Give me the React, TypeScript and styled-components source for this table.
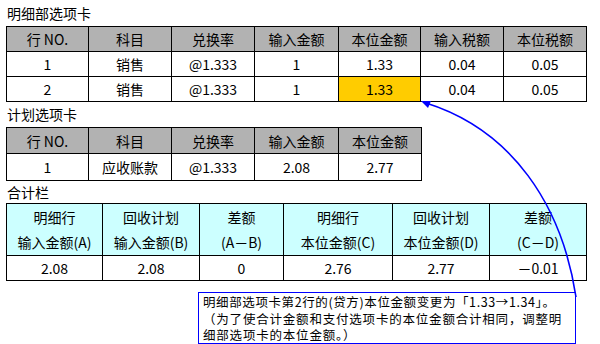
import React from "react";
import styled, { createGlobalStyle } from "styled-components";

const Global = createGlobalStyle`
  html, body { margin: 0; padding: 0; background: #fff; }
  body { font-family: "Noto Sans CJK SC", "Noto Sans", sans-serif; color: #000; }
`;

const Page = styled.div`
  position: relative;
  width: 600px;
  height: 344px;
  overflow: hidden;
  display: flex;
  flex-direction: column;
  padding-left: 6px;
  box-sizing: border-box;
`;

const Title = styled.div<{ $h: number }>`
  height: ${(p) => p.$h}px;
  font-size: 14px;
  line-height: ${(p) => p.$h}px;
  padding-left: 1px;
  white-space: nowrap;
`;

const Table = styled.table<{ $w: number }>`
  border-collapse: collapse;
  table-layout: fixed;
  width: ${(p) => p.$w}px;
  font-size: 14px;
`;

const Th = styled.th<{ $bg: string; $h: number }>`
  background: ${(p) => p.$bg};
  border: 1px solid #000;
  height: ${(p) => p.$h}px;
  padding: 0;
  font-weight: normal;
  text-align: center;
  line-height: 20px;
  white-space: nowrap;
`;

const Td = styled.td<{ $hl?: boolean; $h: number }>`
  background: ${(p) => (p.$hl ? "#ffcc00" : "#fff")};
  border: 1px solid #000;
  height: ${(p) => p.$h}px;
  padding: 0;
  text-align: center;
  line-height: 20px;
  white-space: nowrap;
`;

const HeadLine = styled.div<{ $h: number }>`
  height: ${(p) => p.$h}px;
  line-height: ${(p) => p.$h}px;
`;

const Note = styled.div`
  margin-top: 11px;
  margin-left: 192px;
  width: 378px;
  height: 52px;
  border: 1px solid #0000ff;
  box-sizing: border-box;
  padding: 1px 0 0 4px;
  font-size: 12.5px;
  line-height: 16.5px;
  overflow: hidden;
`;

const NoteLine = styled.div<{ $ls: number }>`
  letter-spacing: ${(p) => p.$ls}px;
  white-space: nowrap;
`;

const Overlay = styled.svg`
  position: absolute;
  left: 0;
  top: 0;
  pointer-events: none;
`;

const t1Cols = [82, 83, 83, 84, 82, 83, 83];
const t2Cols = [82, 83, 83, 84, 83];
const t3Cols = [96, 97, 84, 109, 97, 97];
const sum = (a: number[]) => a.reduce((x, y) => x + y, 0);

const GRAY = "#b2b2b2";
const CYAN = "#ccffff";

export default function App() {
  return (
    <>
      <Global />
      <Page>
        <Title $h={26}>明细部选项卡</Title>
        <Table $w={sum(t1Cols)}>
          <colgroup>
            {t1Cols.map((w, i) => (
              <col key={i} style={{ width: w }} />
            ))}
          </colgroup>
          <thead>
            <tr>
              {["行 NO.", "科目", "兑换率", "输入金额", "本位金额", "输入税额", "本位税额"].map((h) => (
                <Th key={h} $bg={GRAY} $h={24}>{h}</Th>
              ))}
            </tr>
          </thead>
          <tbody>
            <tr>
              <Td $h={24}>1</Td><Td $h={24}>销售</Td><Td $h={24}>@1.333</Td><Td $h={24}>1</Td>
              <Td $h={24}>1.33</Td><Td $h={24}>0.04</Td><Td $h={24}>0.05</Td>
            </tr>
            <tr>
              <Td $h={24}>2</Td><Td $h={24}>销售</Td><Td $h={24}>@1.333</Td><Td $h={24}>1</Td>
              <Td $h={24} $hl>1.33</Td><Td $h={24}>0.04</Td><Td $h={24}>0.05</Td>
            </tr>
          </tbody>
        </Table>

        <Title $h={25}>计划选项卡</Title>
        <Table $w={sum(t2Cols)}>
          <colgroup>
            {t2Cols.map((w, i) => (
              <col key={i} style={{ width: w }} />
            ))}
          </colgroup>
          <thead>
            <tr>
              {["行 NO.", "科目", "兑换率", "输入金额", "本位金额"].map((h) => (
                <Th key={h} $bg={GRAY} $h={25}>{h}</Th>
              ))}
            </tr>
          </thead>
          <tbody>
            <tr>
              <Td $h={26}>1</Td><Td $h={26}>应收账款</Td><Td $h={26}>@1.333</Td>
              <Td $h={26}>2.08</Td><Td $h={26}>2.77</Td>
            </tr>
          </tbody>
        </Table>

        <Title $h={22}>合计栏</Title>
        <Table $w={sum(t3Cols)}>
          <colgroup>
            {t3Cols.map((w, i) => (
              <col key={i} style={{ width: w }} />
            ))}
          </colgroup>
          <thead>
            <tr>
              {[
                ["明细行", "输入金额(A)"],
                ["回收计划", "输入金额(B)"],
                ["差额", "(A－B)"],
                ["明细行", "本位金额(C)"],
                ["回收计划", "本位金额(D)"],
                ["差额", "(C－D)"],
              ].map(([a, b], i) => (
                <Th key={i} $bg={CYAN} $h={51}>
                  <HeadLine $h={26}>{a}</HeadLine>
                  <HeadLine $h={25}>{b}</HeadLine>
                </Th>
              ))}
            </tr>
          </thead>
          <tbody>
            <tr>
              {["2.08", "2.08", "0", "2.76", "2.77", "－0.01"].map((v, i) => (
                <Td key={i} $h={24}>{v}</Td>
              ))}
            </tr>
          </tbody>
        </Table>

        <Note>
          <NoteLine $ls={0.6}>明细部选项卡第2行的(贷方)本位金额变更为「1.33→1.34」。</NoteLine>
          <NoteLine $ls={0.8}>（为了使合计金额和支付选项卡的本位金额合计相同，调整明</NoteLine>
          <NoteLine $ls={0.8}>细部选项卡的本位金额。）</NoteLine>
        </Note>

        <Overlay width="600" height="344" viewBox="0 0 600 344">
          <path d="M 576 297 C 562 205, 512 130, 426 103" fill="none" stroke="#0000ff" strokeWidth="1.6" />
          <polygon points="421,101 431,101 428,108" fill="#0000ff" />
        </Overlay>
      </Page>
    </>
  );
}
